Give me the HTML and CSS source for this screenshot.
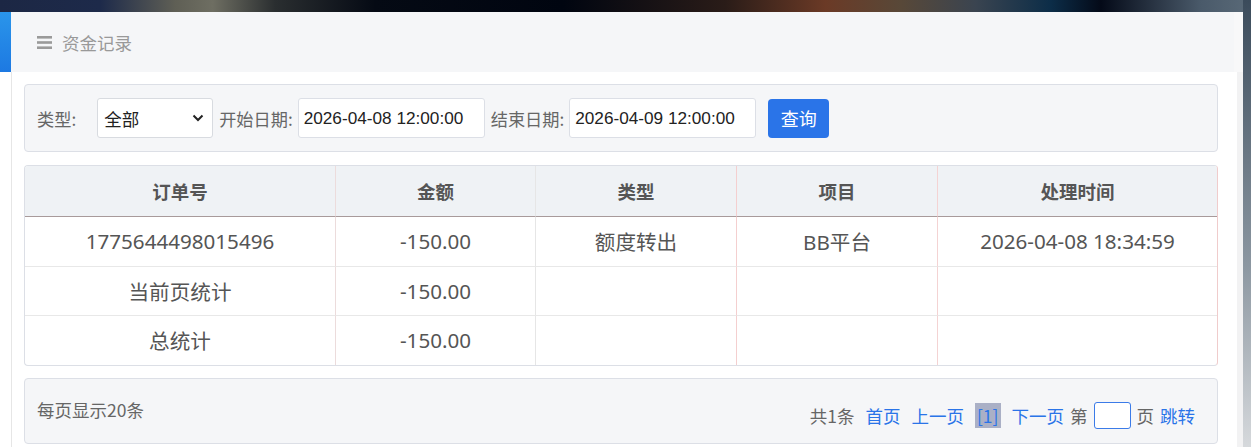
FILE: index.html
```html
<!DOCTYPE html>
<html lang="zh-CN">
  <head>
    <meta charset="UTF-8" />
    <title>资金记录</title>
    <link rel="stylesheet" href="styles.css">
  </head>
  <body>
    <div class="panel">
      <div class="panel-head">
        <div class="accent"></div>
        <div class="head-title">
          <svg class="menu-icon" width="15" height="13" viewBox="0 0 15 13">
            <rect x="0" y="0" width="15" height="2.6" fill="#9a9a9a" />
            <rect x="0" y="5.2" width="15" height="2.6" fill="#9a9a9a" />
            <rect x="0" y="10.4" width="15" height="2.6" fill="#9a9a9a" />
          </svg>
          <span>资金记录</span>
        </div>
      </div>

      <div class="panel-body">
        <div class="filter-box">
          <span class="label first">类型:</span>
          <div class="select">
            <span>全部</span>
            <svg width="12" height="8" viewBox="0 0 12 8">
              <path d="M1.5 1.5 L6 6 L10.5 1.5" fill="none" stroke="#222" stroke-width="2" />
            </svg>
          </div>
          <span class="label">开始日期:</span>
          <input class="date-input" type="text" value="2026-04-08 12:00:00" />
          <span class="label">结束日期:</span>
          <input class="date-input" type="text" value="2026-04-09 12:00:00" />
          <button class="search-btn">查询</button>
        </div>

        <table class="record-table">
          <thead>
            <tr>
              <th class="c1">订单号</th>
              <th class="c2">金额</th>
              <th class="c3">类型</th>
              <th class="c4">项目</th>
              <th class="c5">处理时间</th>
            </tr>
          </thead>
          <tbody>
            <tr>
              <td class="c1">1775644498015496</td>
              <td class="c2">-150.00</td>
              <td class="c3">额度转出</td>
              <td class="c4">BB平台</td>
              <td class="c5">2026-04-08 18:34:59</td>
            </tr>
            <tr>
              <td class="c1">当前页统计</td>
              <td class="c2">-150.00</td>
              <td class="c3"></td>
              <td class="c4"></td>
              <td class="c5"></td>
            </tr>
            <tr>
              <td class="c1">总统计</td>
              <td class="c2">-150.00</td>
              <td class="c3"></td>
              <td class="c4"></td>
              <td class="c5"></td>
            </tr>
          </tbody>
        </table>

        <div class="pager-box">
          <span class="per-page">每页显示20条</span>
          <div class="pager">
            <span>共1条</span>
            <a>首页</a>
            <a>上一页</a>
            <a class="current">[1]</a>
            <a>下一页</a>
            <span class="tight">第</span>
            <input class="page-input" type="text" />
            <span class="tight">页</span>
            <a class="tight">跳转</a>
          </div>
        </div>
      </div>
    </div>
  </body>
</html>
```

FILE: styles.css
```css
body {
  margin: 0;
  height: 447px;
  overflow: hidden;
  font-family: "Noto Sans CJK SC", sans-serif;
  background:
    linear-gradient(to bottom, #3b4b5b, #8d98a2 60%, #d6d9dc) right top / 8px 100% no-repeat,
    linear-gradient(90deg, #1c2744 0%, #1d2a4a 8%, #5f5f55 14%, #6e6e62 17%, #2a2e30 22%, #050a14 30%, #000510 45%, #2a1c18 58%, #6b3a26 66%, #584838 72%, #3a4450 78%, #0c2d48 84%, #040a18 88%, #4a5a6a 96%, #5a6a78 100%);
}
.panel {
  margin-top: 12px;
  width: 1243px;
  background: #fff;
}
.panel-head {
  display: flex;
  height: 60px;
}
.accent {
  width: 11px;
  background: linear-gradient(to bottom, #2a95ea, #1d79e2);
}
.head-title {
  flex: 1;
  display: flex;
  align-items: center;
  padding-left: 26px;
  background: #f5f6f8;
  border-right: 9px solid #f8f8f9;
  color: #999;
  font-size: 17.5px;
}
.menu-icon {
  margin-right: 10px;
}
.panel-body {
  margin-left: 11px;
  border-left: 1px solid #e6e6e6;
  border-right: 6px solid #f2f2f3;
  padding: 12px 19px 12px 12px;
  height: 375px;
  box-sizing: border-box;
}
.filter-box {
  display: flex;
  align-items: center;
  height: 66px;
  padding-left: 12px;
  background: #f5f6f8;
  border: 1px solid #dcdfe6;
  border-radius: 4px;
}
.label {
  color: #666;
  font-size: 17.2px;
  margin: 0 5px 0 6px;
}
.label.first {
  margin: 0 21px 0 0;
}
.select {
  display: flex;
  align-items: center;
  justify-content: space-between;
  width: 116px;
  height: 40px;
  box-sizing: border-box;
  padding: 0 8px 0 6px;
  background: #fff;
  border: 1px solid #d8dbe0;
  border-radius: 3px;
  font-size: 17.5px;
  color: #222;
}
.date-input {
  width: 187px;
  height: 40px;
  box-sizing: border-box;
  padding: 0 5px;
  border: 1px solid #dcdfe6;
  border-radius: 3px;
  font-family: "Liberation Sans", Arial, sans-serif;
  font-size: 17.2px;
  color: #222;
  background: #fff;
}
.search-btn {
  margin-left: 12px;
  width: 61px;
  height: 39px;
  border: none;
  border-radius: 4px;
  background: #2a74e8;
  color: #fff;
  font-family: "Noto Sans CJK SC", sans-serif;
  font-size: 18px;
  padding: 0;
}
.record-table {
  margin-top: 13px;
  width: 1194px;
  border-collapse: separate;
  border-spacing: 0;
  border: 1px solid #dcdfe6;
  border-right-color: #f0cccc;
  border-radius: 4px;
  overflow: hidden;
  table-layout: fixed;
  font-family: "Noto Sans", "Noto Sans CJK SC", sans-serif;
}
.record-table th,
.record-table td {
  text-align: center;
  padding: 0;
  border-right: 1px solid #e6e6e6;
}
.record-table th:last-child,
.record-table td:last-child {
  border-right: none;
}
.record-table th {
  height: 50px;
  background: #eff2f5;
  color: #555;
  font-size: 18.5px;
  font-weight: bold;
  border-bottom: 1px solid #a89a9a;
}
.record-table td {
  height: 48.6px;
  color: #555;
  font-size: 20.6px;
  border-bottom: 1px solid #e8e8e8;
}
.record-table tr:last-child td {
  border-bottom: none;
}
.c1 { width: 310px; }
.c2 { width: 199px; }
.c3 { width: 200px; }
.c4 { width: 200px; }
.record-table .c1 { border-right-color: #ecdcdc; }
.record-table .c3 { border-right-color: #f4cfcf; }
.record-table .c4 { border-right-color: #f4d3d3; }
.pager-box {
  margin-top: 12px;
  display: flex;
  align-items: center;
  justify-content: space-between;
  height: 66px;
  box-sizing: border-box;
  padding: 0 22px 0 12px;
  background: #f5f6f8;
  border: 1px solid #dcdfe6;
  border-radius: 4px;
  font-size: 17.5px;
  color: #666;
}
.per-page {
  margin-top: -2px;
}
.pager {
  display: flex;
  align-items: center;
  margin-top: 10px;
}
.pager a,
.pager span {
  margin-left: 11px;
}
.pager span:first-child {
  margin-left: 0;
}
.pager a {
  color: #2a74e8;
}
.pager .tight {
  margin-left: 6px;
}
.pager .current {
  background: #aab0c6;
  padding: 0 2px;
}
.page-input {
  margin-left: 6px;
  width: 37px;
  height: 27px;
  box-sizing: border-box;
  border: 1px solid #3b7be8;
  border-radius: 3px;
  background: #fff;
}
```
